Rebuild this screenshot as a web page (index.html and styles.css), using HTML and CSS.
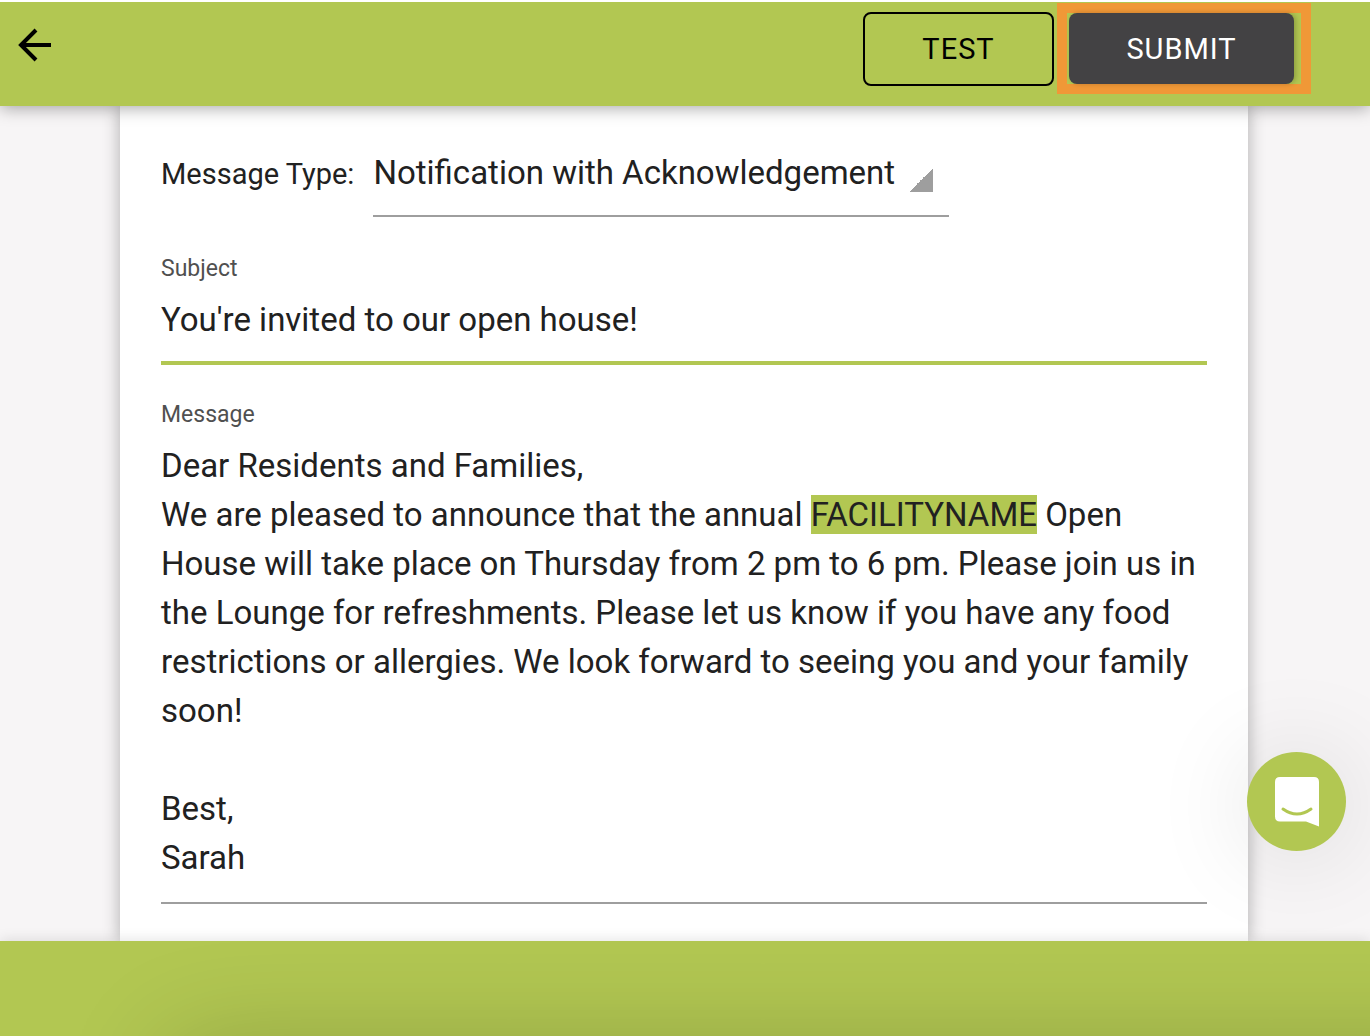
FILE: index.html
```html
<!DOCTYPE html>
<html lang="en">
<head>
    <meta charset="UTF-8">
    <meta name="viewport" content="width=device-width, initial-scale=1.0">
    <title>New Message</title>
    <link rel="stylesheet" href="styles.css">
</head>
<body>
    <header class="toolbar">
        <button type="button" class="btn-back" aria-label="Back">
            <svg width="34" height="34" viewBox="0 0 34 34" fill="none" stroke="#000" stroke-width="4">
                <path d="M33 17H4M18 2L3 17l15 15"/>
            </svg>
        </button>
        <div class="toolbar-actions">
            <button type="button" class="btn btn-test">TEST</button>
            <div class="highlight-box">
                <button type="submit" form="messageForm" class="btn btn-submit">SUBMIT</button>
            </div>
        </div>
    </header>

    <main class="content">
        <form action="" id="messageForm" class="card">
            <div class="type-row">
                <label for="messageType" class="type-label">Message Type:</label>
                <select id="messageType" class="type-select">
                    <option>Notification with Acknowledgement</option>
                    <option>Notification</option>
                </select>
            </div>

            <div class="form-group">
                <label for="subject" class="form-label">Subject</label>
                <input id="subject" type="text" class="form-input" value="You're invited to our open house!">
            </div>

            <div class="form-group">
                <span class="form-label" id="messageLabel">Message</span>
                <div class="form-message" contenteditable="true" role="textbox" aria-multiline="true" aria-labelledby="messageLabel" spellcheck="false">Dear Residents and Families,<br>We are pleased to announce that the annual <mark>FACILITYNAME</mark> Open House will take place on Thursday from 2 pm to 6 pm. Please join us in the Lounge for refreshments. Please let us know if you have any food restrictions or allergies. We look forward to seeing you and your family soon!<br><br>Best,<br>Sarah</div>
            </div>
        </form>
    </main>

    <footer class="bottom-bar"></footer>

    <button type="button" class="chat-button" aria-label="Open chat">
        <svg width="44" height="50" viewBox="0 0 44 50">
            <path fill="#fff" d="M5 0h34q5 0 5 5v44.500L31 44.500H5q-5 0-5-5V5q0-5 5-5z"/>
            <path fill="none" stroke="#b2c752" stroke-width="3" stroke-linecap="round" d="M8 32q14 10 28 0"/>
        </svg>
    </button>
</body>
</html>
```
FILE: styles.css
```css
* {
    box-sizing: border-box;
}
body {
    margin: 0;
    height: 100vh;
    display: flex;
    flex-direction: column;
    font-family: Roboto, sans-serif;
    color: #212121;
    background-color: #f7f5f6;
}
button,
input,
select {
    font-family: inherit;
    color: inherit;
}

/* top bar */
.toolbar {
    display: flex;
    justify-content: space-between;
    align-items: flex-start;
    height: 106px;
    flex-shrink: 0;
    padding: 1px 59px 0 18px;
    border-top: 2px solid #fff;
    background-color: #b2c752;
    box-shadow: 0 2px 16px rgba(0, 0, 0, 0.35);
    z-index: 2;
}
.btn-back {
    display: flex;
    margin-top: 25px;
    padding: 0;
    border: none;
    background: none;
}
.toolbar-actions {
    display: flex;
    align-items: center;
    gap: 3px;
}
.btn {
    padding: 0;
    border-radius: 8px;
    font-size: 29px;
    letter-spacing: 1px;
}
.btn-test {
    width: 191px;
    height: 74px;
    border: 2px solid #000;
    background: none;
    color: #000;
}
.highlight-box {
    display: flex;
    padding: 0 7px 0 2px;
    border: 10px solid #f09837;
}
.btn-submit {
    width: 225px;
    height: 71px;
    border: none;
    background-color: #434244;
    color: #fff;
    box-shadow: 2px 0 5px rgba(0, 0, 0, 0.2);
}

/* form */
.content {
    flex: 1;
    min-height: 0;
    display: flex;
    padding: 0 122px 0 120px;
}
.card {
    flex: 1;
    padding: 28px 41px 0;
    background-color: #fff;
    box-shadow: 0 0 16px rgba(0, 0, 0, 0.3);
}
.type-row {
    display: flex;
    align-items: center;
    gap: 19px;
}
.type-label {
    padding-bottom: 4px;
    font-size: 29px;
}
.type-select {
    width: 576px;
    height: 83px;
    padding: 0 0 5px;
    border: none;
    border-bottom: 2px solid #9e9e9e;
    border-radius: 0;
    appearance: none;
    font-size: 33px;
    background: linear-gradient(135deg, transparent 50%, #9e9e9e 50%) no-repeat right 16px top 34px / 24px 24px;
}
.form-group {
    display: flex;
    flex-direction: column;
    margin-top: 36px;
}
.form-group + .form-group {
    margin-top: 34px;
}
.form-label {
    font-size: 23px;
    line-height: 32px;
    color: #505050;
}
.form-input {
    height: 80px;
    padding: 0 0 8px;
    border: none;
    border-bottom: 4px solid #b2c752;
    background: none;
    font-size: 33px;
    outline: none;
}
.form-message {
    padding: 10px 0 20px;
    border-bottom: 2px solid #9e9e9e;
    font-size: 33px;
    line-height: 49px;
    outline: none;
}
.form-message mark {
    background-color: #b2c752;
    color: inherit;
}

/* bottom bar, shaded from below */
.bottom-bar {
    position: relative;
    height: 95px;
    flex-shrink: 0;
    overflow: hidden;
    background-color: #b2c752;
    box-shadow: 0 -2px 12px rgba(0, 0, 0, 0.1);
}
.bottom-bar::after {
    content: "";
    position: absolute;
    top: 110%;
    left: 170px;
    right: -160px;
    height: 200px;
    box-shadow: 0 0 110px rgba(0, 0, 0, 0.2);
}

.chat-button {
    position: fixed;
    right: 24px;
    bottom: 185px;
    width: 99px;
    height: 99px;
    display: flex;
    align-items: center;
    justify-content: center;
    padding: 0;
    border: none;
    border-radius: 50%;
    background-color: #b2c752;
    box-shadow: 0 4px 100px rgba(0, 0, 0, 0.13);
}
```
